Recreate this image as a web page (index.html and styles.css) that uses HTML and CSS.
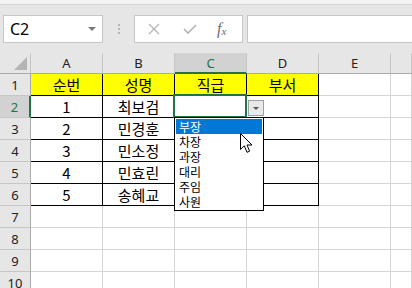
FILE: index.html
```html
<!DOCTYPE html>
<html lang="ko">
<head>
    <meta charset="UTF-8">
    <meta name="viewport" content="width=device-width, initial-scale=1.0">
    <title>직급 목록</title>
    <link rel="stylesheet" href="styles.css">
</head>
<body>
    <div class="app">
        <div class="ribbon-edge"></div>

        <div class="formula-bar">
            <div class="name-box">
                <span>C2</span>
                <span class="name-arrow"></span>
            </div>
            <div class="grip">
                <i></i><i></i><i></i>
            </div>
            <div class="fx-buttons">
                <svg class="fx-icon" width="12" height="12" viewBox="0 0 12 12">
                    <path d="M1 1 L11 11 M11 1 L1 11" stroke="#b4b4b4" stroke-width="1.3" fill="none"/>
                </svg>
                <svg class="fx-icon" width="14" height="12" viewBox="0 0 14 12">
                    <path d="M1 6 L5 10 L13 2" stroke="#b4b4b4" stroke-width="1.6" fill="none"/>
                </svg>
                <span class="fx-label">f<sub>x</sub></span>
            </div>
            <div class="formula-input"></div>
        </div>

        <div class="sheet">
            <div class="corner"><span class="corner-tri"></span></div>
            <div class="col-head">A</div>
            <div class="col-head">B</div>
            <div class="col-head active">C</div>
            <div class="col-head">D</div>
            <div class="col-head">E</div>
            <div class="col-head"></div>

            <div class="row-head">1</div>
            <div class="cell hd">순번</div>
            <div class="cell hd">성명</div>
            <div class="cell hd">직급</div>
            <div class="cell hd">부서</div>
            <div class="cell"></div>
            <div class="cell"></div>

            <div class="row-head active">2</div>
            <div class="cell tb">1</div>
            <div class="cell tb">최보검</div>
            <div class="cell tb current">
                <div class="dd-button"><span></span></div>
                <ul class="dd-list">
                    <li class="picked">부장</li>
                    <li>차장</li>
                    <li>과장</li>
                    <li>대리</li>
                    <li>주임</li>
                    <li>사원</li>
                </ul>
                <svg class="pointer" width="14" height="22" viewBox="0 0 14 22">
                    <path d="M0.5 0.5 L0.5 16.5 L4.3 12.8 L7 19.3 L9.6 18.2 L7 12 L12 12 Z" fill="#fff" stroke="#000" stroke-width="1"/>
                </svg>
            </div>
            <div class="cell tb"></div>
            <div class="cell"></div>
            <div class="cell"></div>

            <div class="row-head">3</div>
            <div class="cell tb">2</div>
            <div class="cell tb">민경훈</div>
            <div class="cell tb"></div>
            <div class="cell tb"></div>
            <div class="cell"></div>
            <div class="cell"></div>

            <div class="row-head">4</div>
            <div class="cell tb">3</div>
            <div class="cell tb">민소정</div>
            <div class="cell tb"></div>
            <div class="cell tb"></div>
            <div class="cell"></div>
            <div class="cell"></div>

            <div class="row-head">5</div>
            <div class="cell tb">4</div>
            <div class="cell tb">민효린</div>
            <div class="cell tb"></div>
            <div class="cell tb"></div>
            <div class="cell"></div>
            <div class="cell"></div>

            <div class="row-head">6</div>
            <div class="cell tb">5</div>
            <div class="cell tb">송혜교</div>
            <div class="cell tb"></div>
            <div class="cell tb"></div>
            <div class="cell"></div>
            <div class="cell"></div>

            <div class="row-head">7</div>
            <div class="cell"></div><div class="cell"></div><div class="cell"></div>
            <div class="cell"></div><div class="cell"></div><div class="cell"></div>

            <div class="row-head">8</div>
            <div class="cell"></div><div class="cell"></div><div class="cell"></div>
            <div class="cell"></div><div class="cell"></div><div class="cell"></div>

            <div class="row-head">9</div>
            <div class="cell"></div><div class="cell"></div><div class="cell"></div>
            <div class="cell"></div><div class="cell"></div><div class="cell"></div>

            <div class="row-head">10</div>
            <div class="cell"></div><div class="cell"></div><div class="cell"></div>
            <div class="cell"></div><div class="cell"></div><div class="cell"></div>
        </div>
    </div>
</body>
</html>
```

FILE: styles.css
```css
*{
    box-sizing: border-box;
}
body{
    margin: 0;
    width: 412px;
    height: 288px;
    overflow: hidden;
    background-color: #e6e6e6;
    font-family: "Noto Sans", "Noto Sans CJK KR", sans-serif;
}
.app{
    width: 412px;
    height: 288px;
    overflow: hidden;
}
.ribbon-edge{
    height: 5px;
    background-color: #f3f3f3;
    border-bottom: 1px solid #d4d4d4;
}

/* formula bar */
.formula-bar{
    display: flex;
    align-items: center;
    height: 28px;
    margin-top: 10px;
    margin-bottom: 10px;
}
.name-box{
    width: 100px;
    height: 28px;
    margin-left: 3px;
    background-color: white;
    border: 1px solid #c6c6c6;
    display: flex;
    align-items: center;
    justify-content: space-between;
    padding: 0 6px 0 6px;
    font-size: 16px;
    color: #000;
}
.name-arrow{
    width: 0;
    height: 0;
    border-left: 4px solid transparent;
    border-right: 4px solid transparent;
    border-top: 4px solid #7a7a7a;
}
.grip{
    width: 31px;
    display: flex;
    flex-direction: column;
    align-items: center;
    gap: 2px;
}
.grip i{
    width: 2px;
    height: 2px;
    background-color: #b4b4b4;
}
.fx-buttons{
    width: 109px;
    height: 28px;
    background-color: white;
    border: 1px solid #c6c6c6;
    display: flex;
    align-items: center;
    padding-left: 13px;
}
.fx-icon{
    margin-right: 23px;
}
.fx-buttons .fx-icon + .fx-icon{
    margin-right: 20px;
}
.fx-label{
    font-family: "Liberation Serif", serif;
    font-style: italic;
    font-size: 16px;
    color: #6e6e6e;
}
.fx-label sub{
    font-size: 11px;
    vertical-align: -1px;
}
.formula-input{
    flex: 1;
    height: 28px;
    margin-left: 4px;
    background-color: white;
    border: 1px solid #c6c6c6;
    border-right: none;
}

/* sheet grid */
.sheet{
    display: grid;
    grid-template-columns: 31px repeat(5, 72px) 1fr;
    grid-template-rows: 21px repeat(10, 22px);
    background-color: white;
}
.corner{
    background-color: #e6e6e6;
    border-right: 1px solid #c6c6c6;
    border-bottom: 1px solid #ababab;
    position: relative;
}
.corner-tri{
    position: absolute;
    right: 3px;
    bottom: 3px;
    width: 0;
    height: 0;
    border-left: 13px solid transparent;
    border-bottom: 13px solid #b4b4b4;
}
.col-head{
    background-color: #e6e6e6;
    border-right: 1px solid #c6c6c6;
    border-bottom: 1px solid #ababab;
    display: flex;
    align-items: center;
    justify-content: center;
    font-size: 13px;
    color: #222;
}
.col-head.active{
    background-color: #d2d2d2;
    border-bottom: 2px solid #217346;
    color: #217346;
}
.row-head{
    background-color: #e6e6e6;
    border-right: 1px solid #ababab;
    border-bottom: 1px solid #c6c6c6;
    display: flex;
    align-items: center;
    justify-content: center;
    font-size: 13px;
    color: #222;
}
.row-head.active{
    background-color: #d2d2d2;
    border-right: 2px solid #217346;
    color: #217346;
}
.cell{
    border-right: 1px solid #d4d4d4;
    border-bottom: 1px solid #d4d4d4;
    display: flex;
    align-items: center;
    justify-content: center;
    font-family: "Noto Sans CJK KR", "Noto Sans", sans-serif;
    font-size: 15px;
    color: #000;
}
.cell.hd{
    background-color: #ffff00;
    border-right-color: #000;
    border-bottom-color: #000;
}
.cell.tb{
    border-right-color: #000;
    border-bottom-color: #000;
}

/* active cell + validation list */
.current{
    position: relative;
}
.current::after{
    content: "";
    position: absolute;
    left: -2px;
    top: -2px;
    right: -1px;
    bottom: -1px;
    border: 2px solid #217346;
}
.dd-button{
    position: absolute;
    left: 73px;
    top: 4px;
    width: 16px;
    height: 16px;
    background-color: #e9e9e9;
    border: 1px solid #a0a0a0;
    display: flex;
    align-items: center;
    justify-content: center;
    z-index: 2;
}
.dd-button span{
    width: 0;
    height: 0;
    border-left: 3px solid transparent;
    border-right: 3px solid transparent;
    border-top: 3px solid #555;
}
.dd-list{
    position: absolute;
    left: -1px;
    top: 21px;
    width: 90px;
    margin: 0;
    padding: 1px;
    list-style: none;
    background-color: white;
    border: 1px solid #000;
    z-index: 3;
}
.dd-list li{
    height: 15px;
    line-height: 15px;
    padding-left: 3px;
    font-size: 12px;
    color: #000;
}
.dd-list li.picked{
    background-color: #0078d7;
    color: white;
}
.pointer{
    position: absolute;
    left: 65px;
    top: 37px;
    z-index: 4;
}
```
